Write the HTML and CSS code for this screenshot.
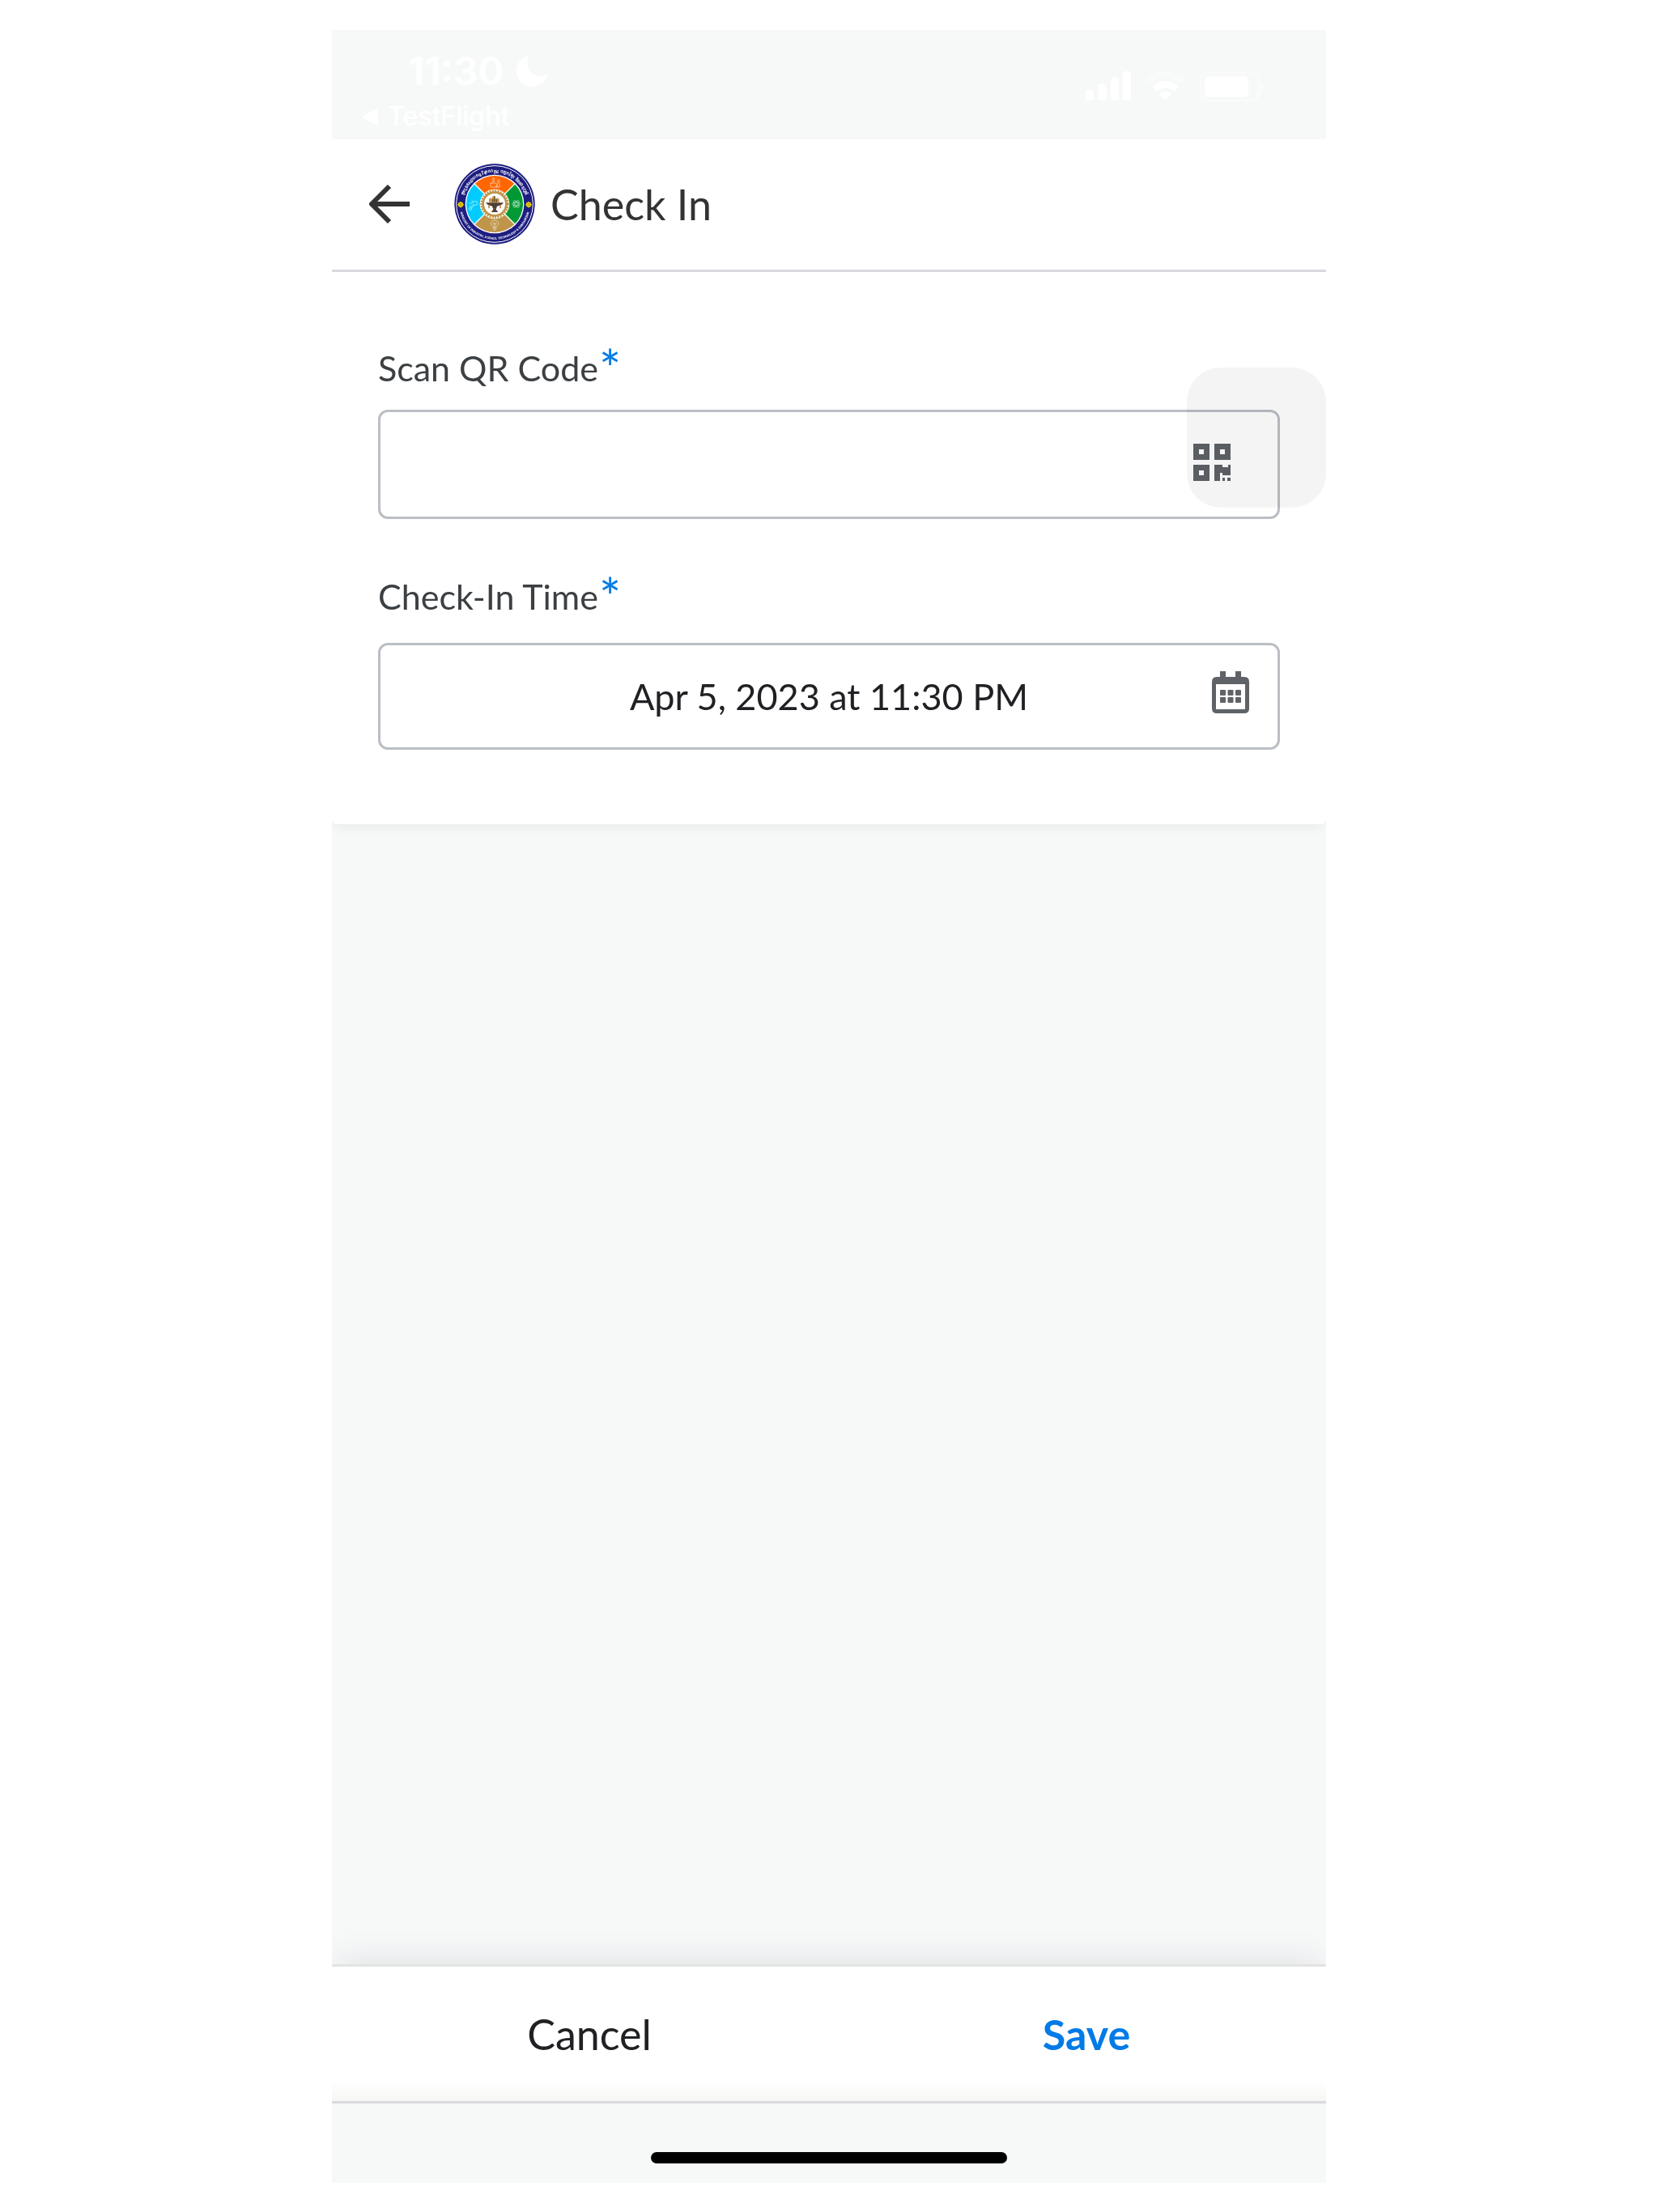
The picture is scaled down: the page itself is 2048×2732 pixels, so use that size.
FILE: index.html
```html
<!DOCTYPE html>
<html lang="en">
<head>
  <meta charset="utf-8">
  <meta name="viewport" content="width=device-width, initial-scale=1">
  <title>Check In</title>
  <link rel="stylesheet" href="styles.css">
</head>
<body>
  <div class="screen">
    <div class="status-bar">
      <div class="status-left">
        <div class="clock">
          <span>11:30</span>
          <svg class="moon" viewBox="0 0 38 38" aria-hidden="true"><path d="M14 0C5 3 0 10 0 19c0 11 8 19 19 19 9 0 16-5 19-13 1-2 0-2-2-1-14 4-26-6-22-22 0-1 1-2 0-2z"/></svg>
        </div>
        <a class="back-app" href="#">
          <svg class="triangle" viewBox="0 0 20 21" aria-hidden="true"><path d="M2 9 17 1q3-1 3 2v15q0 3-3 2L2 12q-3-1.500 0-3z"/></svg>
          <span>TestFlight</span>
        </a>
      </div>
      <div class="status-icons">
        <svg class="signal" viewBox="0 0 56 36" aria-hidden="true"><rect y="23" width="10" height="13" rx="3"/><rect x="15.500" y="16" width="10" height="20" rx="3"/><rect x="31" y="8" width="10" height="28" rx="3"/><rect x="46" width="10" height="36" rx="3"/></svg>
        <svg class="wifi" viewBox="0 0 49 36" aria-hidden="true"><path opacity=".3" d="M0 10q24.500-20 49 0l-5 6q-19.500-16-39 0z"/><path d="M8.500 19q16-14 32 0l-5 6q-11-9-22 0z"/><path d="M16.500 28q8-7 16 0l-8 8z"/></svg>
        <svg class="battery" viewBox="0 0 80 38" aria-hidden="true"><rect x="1.500" y="1.500" width="71" height="35" rx="10" fill="none" stroke="#fff" stroke-width="3" opacity=".35"/><rect x="6" y="6" width="54" height="26" rx="6"/><path opacity=".35" d="M75 13q4 1 4 6t-4 6z"/></svg>
      </div>
    </div>

    <header class="app-header">
      <button class="back" type="button" aria-label="Back">
        <svg viewBox="0 0 51 51" aria-hidden="true"><path d="M25 3 3 25l22 22M3 25h47" fill="none" stroke="#333" stroke-width="6" stroke-linejoin="round"/></svg>
      </button>
      <svg class="logo" viewBox="-150 -150 300 300" role="img" aria-label="Ministry emblem">
        <defs>
          <path id="arc-bottom" d="M-131 0A131 131 0 0 0 131 0"/>
          <path id="arc-top" d="M-118 0A118 118 0 0 1 118 0"/>
        </defs>
        <circle r="149" fill="#1d1d80"/>
        <circle r="142" fill="none" stroke="#fff" stroke-width="3"/>
        <circle r="109" fill="#fff"/>
        <g transform="rotate(45)">
          <path d="M0 0V-105A105 105 0 0 0-105 0z" fill="#ff6600"/>
          <path d="M0 0H105A105 105 0 0 0 0-105z" fill="#009933"/>
          <path d="M0 0V105A105 105 0 0 0 105 0z" fill="#bf9549"/>
          <path d="M0 0H-105A105 105 0 0 0 0 105z" fill="#00ccff"/>
          <path d="M-106 0H106M0-106V106" stroke="#fff" stroke-width="4"/>
        </g>
        <circle r="55" fill="#fff"/>
        <circle r="49" fill="none" stroke="#bf9549" stroke-width="8" stroke-dasharray="6 4"/>
        <circle r="43" fill="none" stroke="#bf9549" stroke-width="8"/>
        <circle r="38" fill="#fff"/>
        <path d="M-33-5H33Q25 6 9 8L5 20 13 30H-13L-5 20-9 8Q-25 6-33-5z" fill="#4e4030"/>
        <path d="M-21-7V-19l4-5 4 5 5-7 4-5 4 5 5 7 4-5 4 5 4-3v15z" fill="#bf9549"/>
        <path d="M-7-7V-18M7-7V-18M0-7V-30M-6 17H6" stroke="#6b4d28" stroke-width="4"/>
        <path d="M-21 4v12M21 4v12" stroke="#c98258" stroke-width="5"/>
        <g fill="none" stroke="#fff" stroke-width="2" opacity=".85">
          <path d="M-15-63v-14h8v-19h5v19h7l4 6v8zM5-63l6-14v-12h6v12l2 14zM-16-78h6"/>
          <ellipse cx="80" rx="15" ry="6" transform="rotate(55 80 0)"/><ellipse cx="80" rx="15" ry="6" transform="rotate(-55 80 0)"/><ellipse cx="80" rx="15" ry="6"/>
          <path d="M-96-3h14l5-7h12v13h-14l-7 5h-6M-94 13h8v8h-8zM-78-10h-8M-76 4l-10 13"/>
          <path d="M-5 92v-7q-9-6-9-13a14 12 0 0 1 28 0q0 7-9 13v7zM-5 86H5M0 86V70M-7 68l7 8 7-8M-4 97h8"/>
        </g>
        <g fill="#f4dc00">
          <path d="M-126-10l12 12-12 12-12-12zM-134-6h16v16h-16z"/>
          <path d="M126-10l12 12-12 12-12-12zM118-6h16v16h-16z"/>
        </g>
        <g fill="none" stroke="#807020" stroke-width="2"><circle cx="-126" cy="2" r="4"/><circle cx="126" cy="2" r="4"/></g>
        <text class="seal-latin"><textPath href="#arc-bottom" startOffset="50%" text-anchor="middle">MINISTRY OF INDUSTRY, SCIENCE, TECHNOLOGY &amp; INNOVATION</textPath></text>
        <text class="seal-khmer"><textPath href="#arc-top" startOffset="50%" text-anchor="middle">ក្រសួងឧស្សាហកម្ម វិទ្យាសាស្ត្រ បច្ចេកវិទ្យា និងនវានុវត្តន៍</textPath></text>
      </svg>
      <h1 class="title">Check In</h1>
    </header>

    <main class="content">
      <form class="form" id="check-in">
        <div class="field">
          <label for="qr">Scan QR Code<span class="required">*</span></label>
          <div class="control">
            <input id="qr" type="text" required>
            <button class="scan" type="button" aria-label="Scan">
              <svg viewBox="0 0 46 46" aria-hidden="true"><path fill-rule="evenodd" d="M0 0h20v20H0zM7 7v6h6V7zM26 0h20v20H26zM33 7v6h6V7zM0 26h20v20H0zM7 33v6h6v-6zM26 26h10v3h7v-3h3v13H36v-3h-3v10h-7zM36 42h3v4h-3zM42 42h4v4h-4z"/></svg>
            </button>
          </div>
        </div>
        <div class="field">
          <label for="time">Check-In Time<span class="required">*</span></label>
          <div class="control control-date">
            <input id="time" type="text" value="Apr 5, 2023 at 11:30 PM" required>
            <button class="pick-date" type="button" aria-label="Choose date">
              <svg viewBox="0 0 46 52" aria-hidden="true"><path fill-rule="evenodd" d="M10 0h7v7h12V0h7v7h4q6 0 6 6v33q0 6-6 6H6q-6 0-6-6V13q0-6 6-6h4zM5 16v31h36V16z"/><rect x="10" y="23" width="7" height="7" rx="1"/><rect x="19.500" y="23" width="7" height="7" rx="1"/><rect x="29" y="23" width="7" height="7" rx="1"/><rect x="10" y="32" width="7" height="7" rx="1"/><rect x="19.500" y="32" width="7" height="7" rx="1"/><rect x="29" y="32" width="7" height="7" rx="1"/></svg>
            </button>
          </div>
        </div>
        <span class="touch"></span>
      </form>
    </main>

    <footer class="actions">
      <button class="action" type="reset" form="check-in">Cancel</button>
      <button class="action action-primary" type="submit" form="check-in">Save</button>
    </footer>
    <div class="home-area"><span class="home-indicator"></span></div>
  </div>
</body>
</html>
```
FILE: styles.css
```css
* {
  box-sizing: border-box;
}

body {
  margin: 0;
  background: #fff;
  color: #202124;
  font-family: Lato, "Noto Sans", sans-serif;
}

button {
  padding: 0;
  border: 0;
  background: none;
  font: inherit;
  cursor: pointer;
}

button svg {
  display: block;
  width: 100%;
  height: 100%;
}

.screen {
  display: flex;
  flex-direction: column;
  max-width: 1228px;
  min-height: 100vh;
  margin: 0 auto;
  padding: 37px 0 36px;
}

/* Status bar */
.status-bar {
  display: flex;
  justify-content: space-between;
  height: 135px;
  padding: 23px 76px 0 37px;
  background: #f7f9f9;
  color: #fff;
  fill: #fff;
  font-family: Inter, sans-serif;
}

.clock {
  display: flex;
  align-items: center;
  gap: 16px;
  padding-left: 57px;
  font-size: 48px;
  font-weight: 600;
  line-height: 56px;
}

.moon {
  width: 38px;
  height: 38px;
}

.back-app {
  display: flex;
  align-items: center;
  gap: 12px;
  color: inherit;
  font-size: 32px;
  font-weight: 500;
  line-height: 56px;
  text-decoration: none;
}

.triangle {
  width: 20px;
  height: 21px;
}

.status-icons {
  display: flex;
  gap: 18px;
  padding-top: 28px;
}

.signal {
  width: 56px;
  height: 36px;
}

.wifi {
  width: 49px;
  height: 36px;
}

.battery {
  width: 80px;
  height: 38px;
}

/* Header */
.app-header {
  display: flex;
  align-items: center;
  height: 164px;
  padding: 0 46px 1px;
  border-bottom: 3px solid #d9d9e0;
}

.back {
  width: 51px;
  height: 51px;
}

.logo {
  width: 100px;
  height: 100px;
  margin: 0 19px 0 54px;
}

.seal-latin,
.seal-khmer {
  fill: #fff;
  font-family: "Noto Sans", sans-serif;
  font-size: 11px;
  font-weight: 700;
}

.seal-khmer {
  font-size: 15px;
}

.title {
  margin: 0;
  color: #333;
  font-size: 52px;
  font-weight: 400;
}

/* Form */
.content {
  flex: 1;
  background: #f7f9f9;
}

.form {
  position: relative;
  display: flex;
  flex-direction: column;
  gap: 68px;
  padding: 91px 57px 92px;
  border-radius: 0 0 6px 6px;
  background: #fff;
  box-shadow: 0 6px 18px -4px rgba(0, 0, 0, 0.08);
  clip-path: inset(0 0 -30px 0);
}

.field label {
  display: flex;
  color: #3c4043;
  font-size: 43px;
  line-height: 56px;
}

.required {
  height: 56px;
  padding-left: 1px;
  color: #007be6;
  font-size: 64px;
  font-weight: 400;
  line-height: 56px;
}

.control {
  position: relative;
  height: 135px;
  margin-top: 23px;
}

.control-date {
  height: 132px;
  margin-top: 29px;
}

.control input {
  width: 100%;
  height: 100%;
  padding: 0 120px;
  border: 3px solid #bbbfc5;
  border-radius: 12px;
  outline: 0;
  background: none;
  color: inherit;
  font: inherit;
  font-size: 45px;
  text-align: center;
}

.scan,
.pick-date {
  position: absolute;
  fill: #5f6368;
}

.scan {
  top: 42px;
  right: 61px;
  width: 46px;
  height: 46px;
}

.pick-date {
  top: 35px;
  right: 38px;
  width: 46px;
  height: 52px;
}

.touch {
  position: absolute;
  top: 118px;
  right: 0;
  width: 172px;
  height: 173px;
  border-radius: 42px;
  background: rgba(0, 0, 0, 0.045);
  pointer-events: none;
}

/* Footer */
.actions {
  position: relative;
  display: grid;
  grid-template-columns: 1fr 1fr;
  height: 169px;
  border-top: 3px solid #e3e3e3;
  background: linear-gradient(to top, #f6f6f4, #fff 24px);
  box-shadow: 0 -12px 36px -6px rgba(32, 33, 60, 0.1);
  clip-path: inset(-50px 0 0 0);
}

.action {
  padding-left: 22px;
  color: #202124;
  font-size: 52px;
}

.action-primary {
  color: #007be6;
  font-weight: 700;
}

.home-area {
  display: flex;
  justify-content: center;
  height: 101px;
  padding-top: 60px;
  border-top: 3px solid #d9d9e0;
  background: #f7f9f9;
}

.home-indicator {
  width: 440px;
  height: 14px;
  border-radius: 7px;
  background: #000;
}
```
